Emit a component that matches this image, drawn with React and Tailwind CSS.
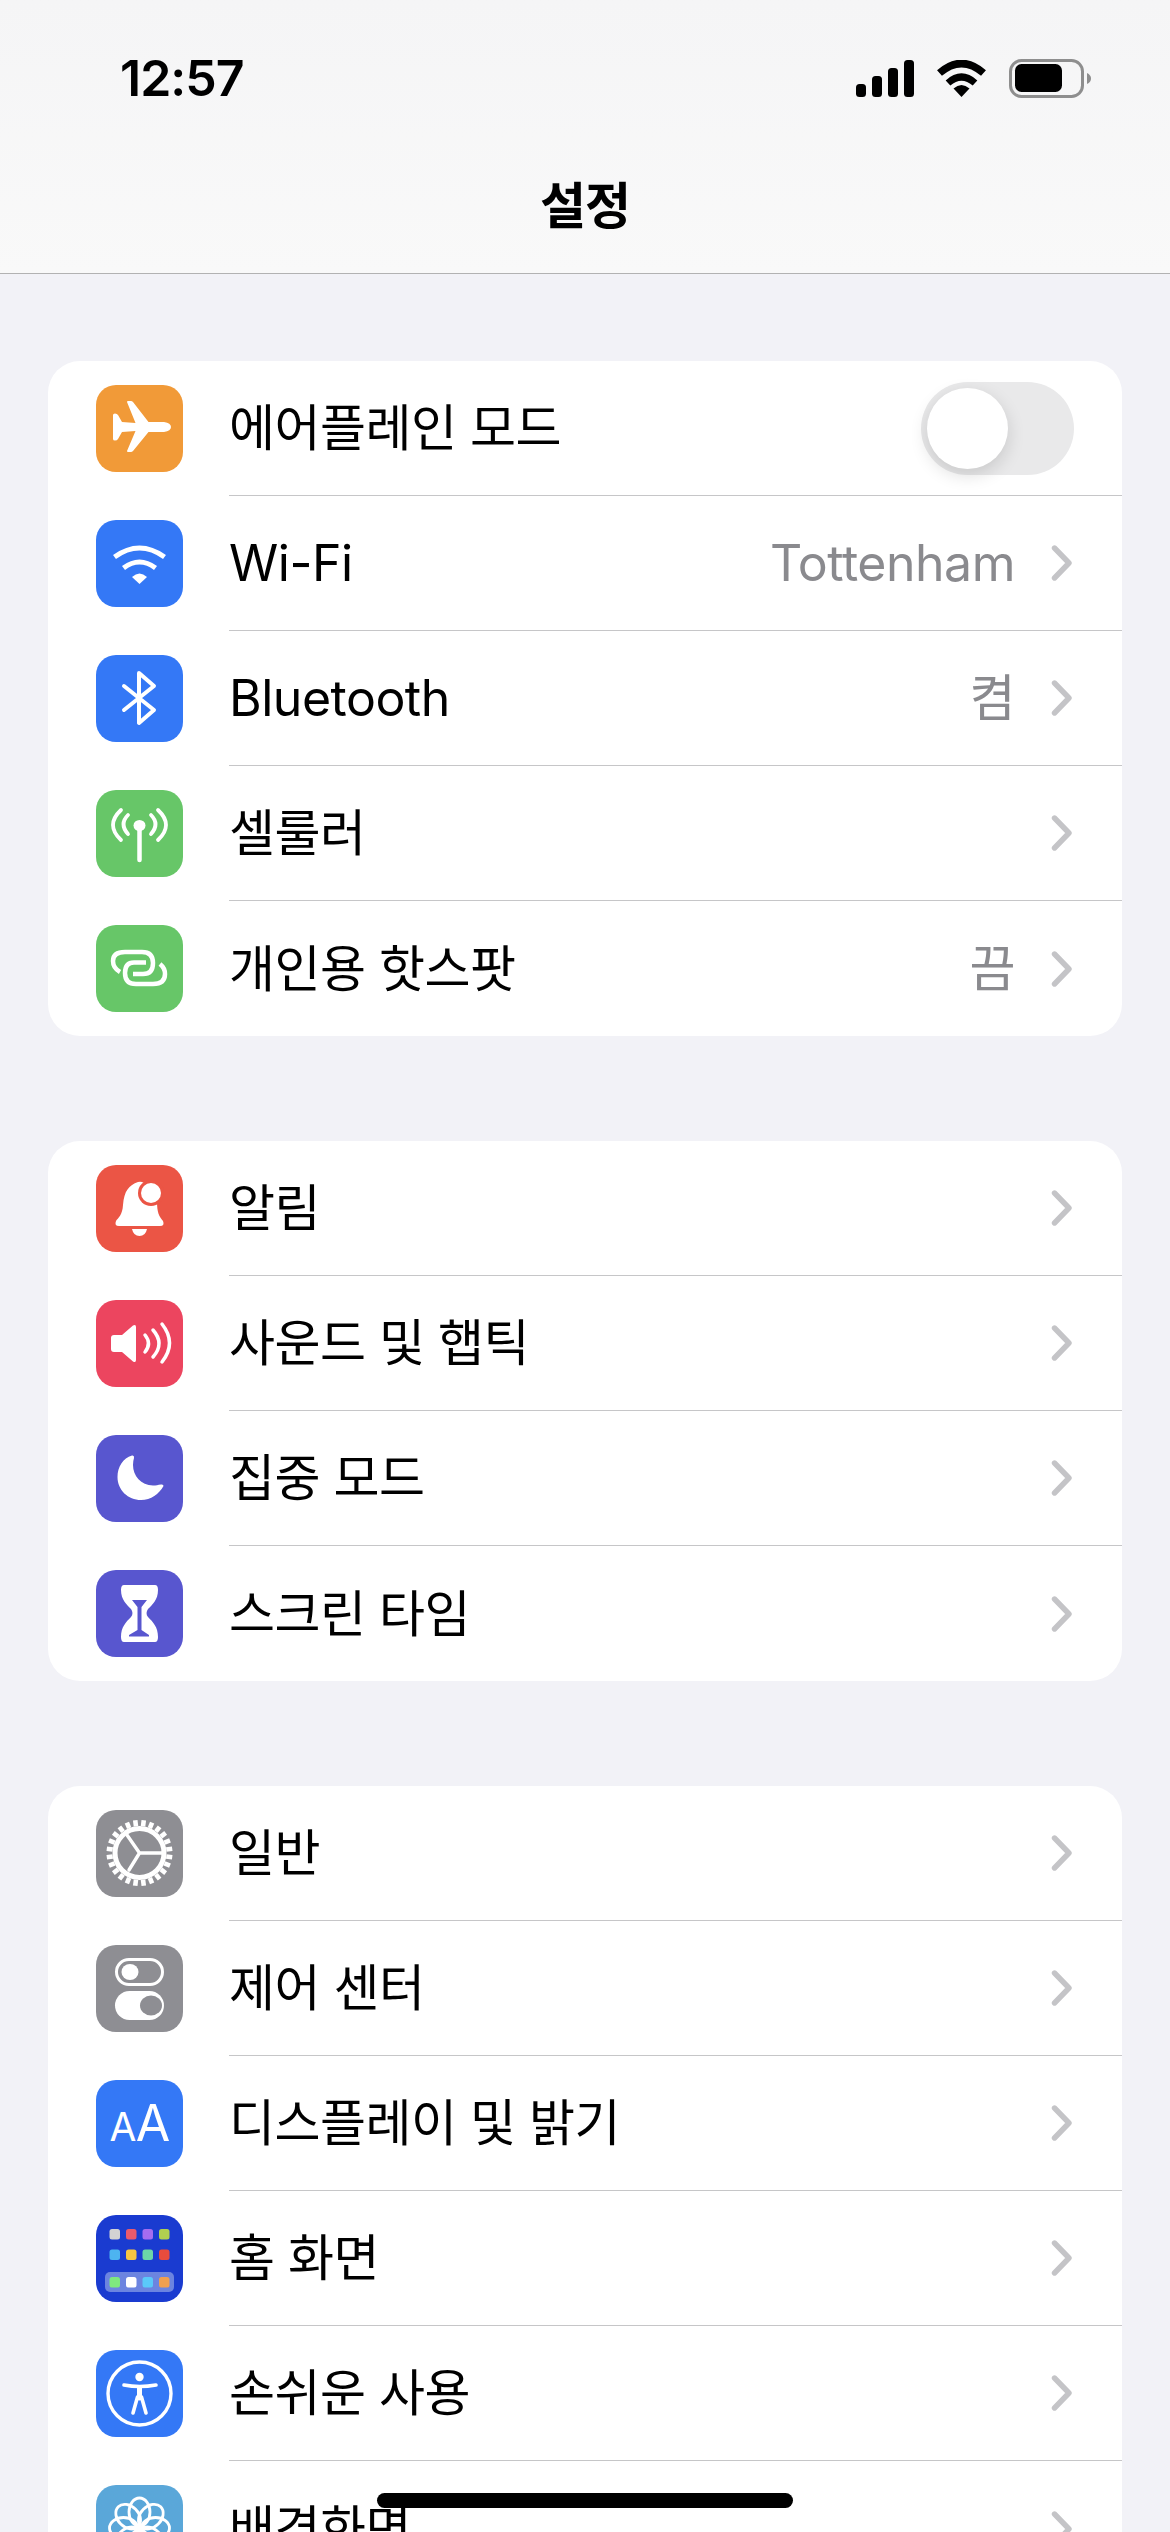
import React from "react";

const W = { stroke: "#fff", fill: "none", strokeLinecap: "round", strokeLinejoin: "round" };

const icons = {
  plane: (
    <path fill="#fff" d="M17 30 Q17 28.5 19 28.5 Q21 28.5 22 30 L26 37 L39.5 38 L31 17 Q31 16 32 16 L35 16 Q36 16 37 17 L52.5 37 L68 37 Q75 38 75 42 Q75 46 68 47 L52.5 47 L37 66 Q36 67 35 67 L32 67 Q31 67 31 66 L39.5 46 L26 47 L22 54 Q21 55.5 19 55.5 Q17 55.5 17 54 Z" />
  ),
  wifi: (
    <>
      <path d="M18.5 37 Q43.5 19 68.5 37" fill="none" stroke="#fff" strokeWidth="5" />
      <path d="M27.5 48 Q43.5 36 59.5 48" fill="none" stroke="#fff" strokeWidth="5" />
      <path fill="#fff" d="M36 57 Q43.5 50 51 57 L43.5 64 Z" />
    </>
  ),
  bt: <path {...W} strokeWidth="4" d="M28 31 L58 55 L43 68 V18 L58 31 L28 55" />,
  cell: (
    <>
      <ellipse cx="43.5" cy="35.5" rx="6" ry="5.5" fill="#fff" />
      <path {...W} strokeWidth="4.5" d="M43.5 38 V70" />
      <path {...W} strokeWidth="3.8" d="M32 25 Q23 34 32 44 M25 20 Q9 35 25 50 M55 25 Q64 34 55 44 M62 20 Q78 35 62 50" />
    </>
  ),
  hot: (
    <path {...W} strokeLinecap="butt" strokeWidth="4.5" d="M24 47 Q17 43 17 36 Q17 27 29 27 H46 Q57 27 57 38 Q57 49 47 49 H37 M50 37.5 H38 Q29 37.5 29 48 Q29 59 40 59 H57 Q69 59 69 49 Q69 43 64 39" />
  ),
  bell: (
    <>
      <path fill="#fff" d="M42 17 C33 20 28 26 27 40 C26.5 50 22 53 20 56 Q18 61 23 61 H64 Q69 61 67 56 C63 51 61 48 61 36 C61 28 55 20 48 18 Q45 16 42 17 Z" />
      <path fill="#fff" d="M36 64 H51 Q49.5 71 43.5 71 Q37.5 71 36 64 Z" />
      <circle cx="55" cy="28" r="13" fill="#eb5545" />
      <circle cx="55" cy="28" r="10" fill="#fff" />
    </>
  ),
  sound: (
    <>
      <path fill="#fff" d="M18 35 H26 L37 25.5 Q40 24 40 27 V60 Q40 63 37 61.5 L26 52 H18 Q15 52 15 49 V38 Q15 35 18 35 Z" />
      <path {...W} strokeWidth="3.5" d="M49 35 Q56 43.5 49 52 M57 30 Q69 43.5 57 57 M66 24 Q81 43 66 62" />
    </>
  ),
  moon: (
    <path fill="#fff" d="M36 20.5 C27 23 21.5 32 21.5 42 C21.5 55 32 65 45 65 C55 65 63 59 67.5 51 Q67.5 49 65 49.5 C62 50 60 50.5 57 50.5 C45 50 37 41 37 30 Q37 26 38 23 Q38.5 20 36 20.5 Z" />
  ),
  glass: (
    <>
      <path fill="#fff" d="M28 15 H59 Q62 15 62 20 C62 30 56 35 52 39 Q49 43.5 52 47 C57 52 62 57 62 67 Q62 72 59 72 H28 Q25 72 25 67 C25 57 30 52 35 47 Q38 43.5 35 39 C31 35 25 30 25 20 Q25 15 28 15 Z" />
      <path fill="#5856cf" d="M36 30 H51 L45.5 37 V60 L53 65 V66.5 H33 V65 L41.5 60 V37 Z" />
    </>
  ),
  gear: (
    <>
      {Array.from({ length: 24 }).map((_, i) => (
        <line key={i} x1="43.5" y1="16" x2="43.5" y2="10" stroke="#fff" strokeWidth="4.6" transform={`rotate(${i * 15 + 7.5} 43.5 43)`} />
      ))}
      <circle cx="43.5" cy="43" r="24.5" fill="none" stroke="#fff" strokeWidth="5" />
      <path {...W} strokeWidth="3.4" d="M43.5 43 H67 M43.5 43 L31 25 M43.5 43 L33 60" />
    </>
  ),
  ctrl: (
    <>
      <rect x="20.5" y="14.5" width="46" height="25" rx="12.5" fill="none" stroke="#fff" strokeWidth="3" />
      <ellipse cx="34" cy="27" rx="8.5" ry="8" fill="#fff" />
      <rect x="19" y="46" width="49" height="29" rx="14.5" fill="#fff" />
      <ellipse cx="55" cy="60.5" rx="11" ry="10" fill="#8e8e93" />
    </>
  ),
  aa: (
    <>
      <text x="27" y="61" textAnchor="middle" fontFamily="Inter, sans-serif" fontSize="39" fill="#fff">A</text>
      <text x="57" y="61" textAnchor="middle" fontFamily="Inter, sans-serif" fontSize="50" fill="#fff">A</text>
    </>
  ),
  home: (
    <>
      <rect x="9" y="57" width="69" height="20" rx="5" fill="#6c84e0" />
      {[
        [14, ["#d3d3d3", "#ea5a6c", "#a56cf0", "#b0d050"]],
        [34.5, ["#4db4f0", "#f5c542", "#6bd6a8", "#e84c3d"]],
        [62, ["#7fe87f", "#ffffff", "#5ac8fa", "#f0a050"]],
      ].map(([y, cs]) =>
        cs.map((c, i) => (
          <rect key={c} x={[13.5, 30, 46.5, 63][i]} y={y} width="10.5" height="10.5" rx="2.5" fill={c} />
        ))
      )}
    </>
  ),
  access: (
    <>
      <circle cx="43.5" cy="43.5" r="31.5" fill="none" stroke="#fff" strokeWidth="3.4" />
      <circle cx="43.5" cy="27" r="4.2" fill="#fff" />
      <path {...W} strokeWidth="3.6" d="M28 35 Q43.5 38 60 35" />
      <path {...W} strokeWidth="5" d="M43.5 38 V48" />
      <path {...W} strokeWidth="3.6" d="M41.5 47 L37 63 M45.5 47 L50 63" />
    </>
  ),
  flower: (
    <>
      {[0, 45, 90, 135, 180, 225, 270, 315].map((a) => (
        <ellipse key={a} cx="43.5" cy="27" rx="10.5" ry="14" fill="none" stroke="#fff" strokeWidth="2.8" transform={`rotate(${a} 43.5 43)`} />
      ))}
      <circle cx="43.5" cy="43" r="5" fill="#fff" />
    </>
  ),
};

const Icon = ({ name, bg }) => (
  <div className="w-[87px] h-[87px] rounded-[20px] shrink-0" style={{ backgroundColor: bg }}>
    <svg viewBox="0 0 87 87" width="87" height="87">{icons[name]}</svg>
  </div>
);

const Chevron = () => (
  <svg width="21" height="36" viewBox="0 0 21 36" className="shrink-0">
    <path d="M3.5 3 L18 18 L3.5 33" fill="none" stroke="#c4c4c7" strokeWidth="5.4" strokeLinecap="round" strokeLinejoin="round" />
  </svg>
);

const Toggle = () => (
  <div className="w-[153px] h-[93px] rounded-full bg-[#e9e9ea] flex items-center pl-[6px]">
    <div className="w-[81px] h-[81px] rounded-full bg-white shadow-[0_6px_18px_rgba(0,0,0,0.14)]" />
  </div>
);

const Row = ({ name, bg, label, value, toggle, last }) => (
  <div className="h-[135px] flex items-stretch pl-[48px]">
    <div className="flex items-center pr-[46px]">
      <Icon name={name} bg={bg} />
    </div>
    <div className={`flex-1 flex items-center ${last ? "" : "border-b border-[#c6c6c8]"} ${toggle ? "pr-[48px]" : "pr-[50px]"}`}>
      <span className="flex-1 text-[50px] leading-[60px] text-black tracking-[-0.5px]">{label}</span>
      {toggle ? (
        <Toggle />
      ) : (
        <>
          {value && <span className="text-[50px] leading-[60px] text-[#8a8a8e] mr-[36px] tracking-[-0.5px]">{value}</span>}
          <Chevron />
        </>
      )}
    </div>
  </div>
);

const Card = ({ rows, extra }) => (
  <div className="mx-[48px] bg-white rounded-[32px] overflow-hidden shrink-0">
    {rows.map((r, i) => (
      <Row key={r.label} {...r} last={i === rows.length - 1 && !extra} />
    ))}
  </div>
);

const group1 = [
  { name: "plane", bg: "#f19a38", label: "에어플레인 모드", toggle: true },
  { name: "wifi", bg: "#3478f6", label: "Wi-Fi", value: "Tottenham" },
  { name: "bt", bg: "#3478f6", label: "Bluetooth", value: "켬" },
  { name: "cell", bg: "#67c668", label: "셀룰러" },
  { name: "hot", bg: "#67c668", label: "개인용 핫스팟", value: "끔" },
];
const group2 = [
  { name: "bell", bg: "#eb5545", label: "알림" },
  { name: "sound", bg: "#ec455f", label: "사운드 및 햅틱" },
  { name: "moon", bg: "#5856cf", label: "집중 모드" },
  { name: "glass", bg: "#5856cf", label: "스크린 타임" },
];
const group3 = [
  { name: "gear", bg: "#8e8e93", label: "일반" },
  { name: "ctrl", bg: "#8e8e93", label: "제어 센터" },
  { name: "aa", bg: "#3478f6", label: "디스플레이 및 밝기" },
  { name: "home", bg: "#1a3bd0", label: "홈 화면" },
  { name: "access", bg: "#3478f6", label: "손쉬운 사용" },
  { name: "flower", bg: "#5aa7d9", label: "배경화면" },
];

export default function App() {
  return (
    <div className="relative w-[1170px] h-[2532px] overflow-hidden bg-[#f2f2f7] font-['Inter','Noto_Sans_CJK_KR',sans-serif]">
      <header className="h-[274px] border-b border-[#b2b2b2] bg-linear-to-b from-[#f5f5f6] to-[#f9f9f9]">
        <div className="mt-0 pt-[57px] h-[99px] flex items-center justify-between pl-[120px] pr-[79px]">
          <span className="text-[50px] leading-[42px] font-semibold text-black tracking-[-1px]">12:57</span>
          <div className="flex items-center gap-[22px]">
            <svg width="58" height="37" viewBox="0 0 58 37">
              <rect x="0" y="24" width="10" height="13" rx="3.5" />
              <rect x="16" y="16" width="10" height="21" rx="3.5" />
              <rect x="32" y="8" width="10" height="29" rx="3.5" />
              <rect x="48" y="0" width="10" height="37" rx="3.5" />
            </svg>
            <svg width="51" height="37" viewBox="0 0 51 37">
              <path d="M3.5 13 Q25.5 -6 47.5 13" fill="none" stroke="#000" strokeWidth="7.5" />
              <path d="M12 23 Q25.5 11 39 23" fill="none" stroke="#000" strokeWidth="7" />
              <path d="M17.5 28.5 Q25.5 21.5 33.5 28.5 L25.5 37 Z" />
            </svg>
            <svg width="82" height="39" viewBox="0 0 82 39">
              <rect x="1.5" y="1.5" width="72" height="36" rx="11" fill="none" stroke="#8e8e8e" strokeWidth="3" />
              <rect x="6" y="5" width="47" height="28" rx="6.5" />
              <path d="M78 14 Q82 16 82 19.5 Q82 23 78 25 Z" fill="#8e8e8e" />
            </svg>
          </div>
        </div>
        <h1 className="mt-[77px] text-center text-[50px] leading-[60px] font-semibold text-black tracking-[-1px]">설정</h1>
      </header>
      <main className="pt-[87px] flex flex-col gap-[105px]">
        <Card rows={group1} />
        <Card rows={group2} />
        <Card rows={group3} />
      </main>
      <div className="absolute left-[377px] top-[2493px] w-[416px] h-[15px] rounded-full bg-black" />
    </div>
  );
}
